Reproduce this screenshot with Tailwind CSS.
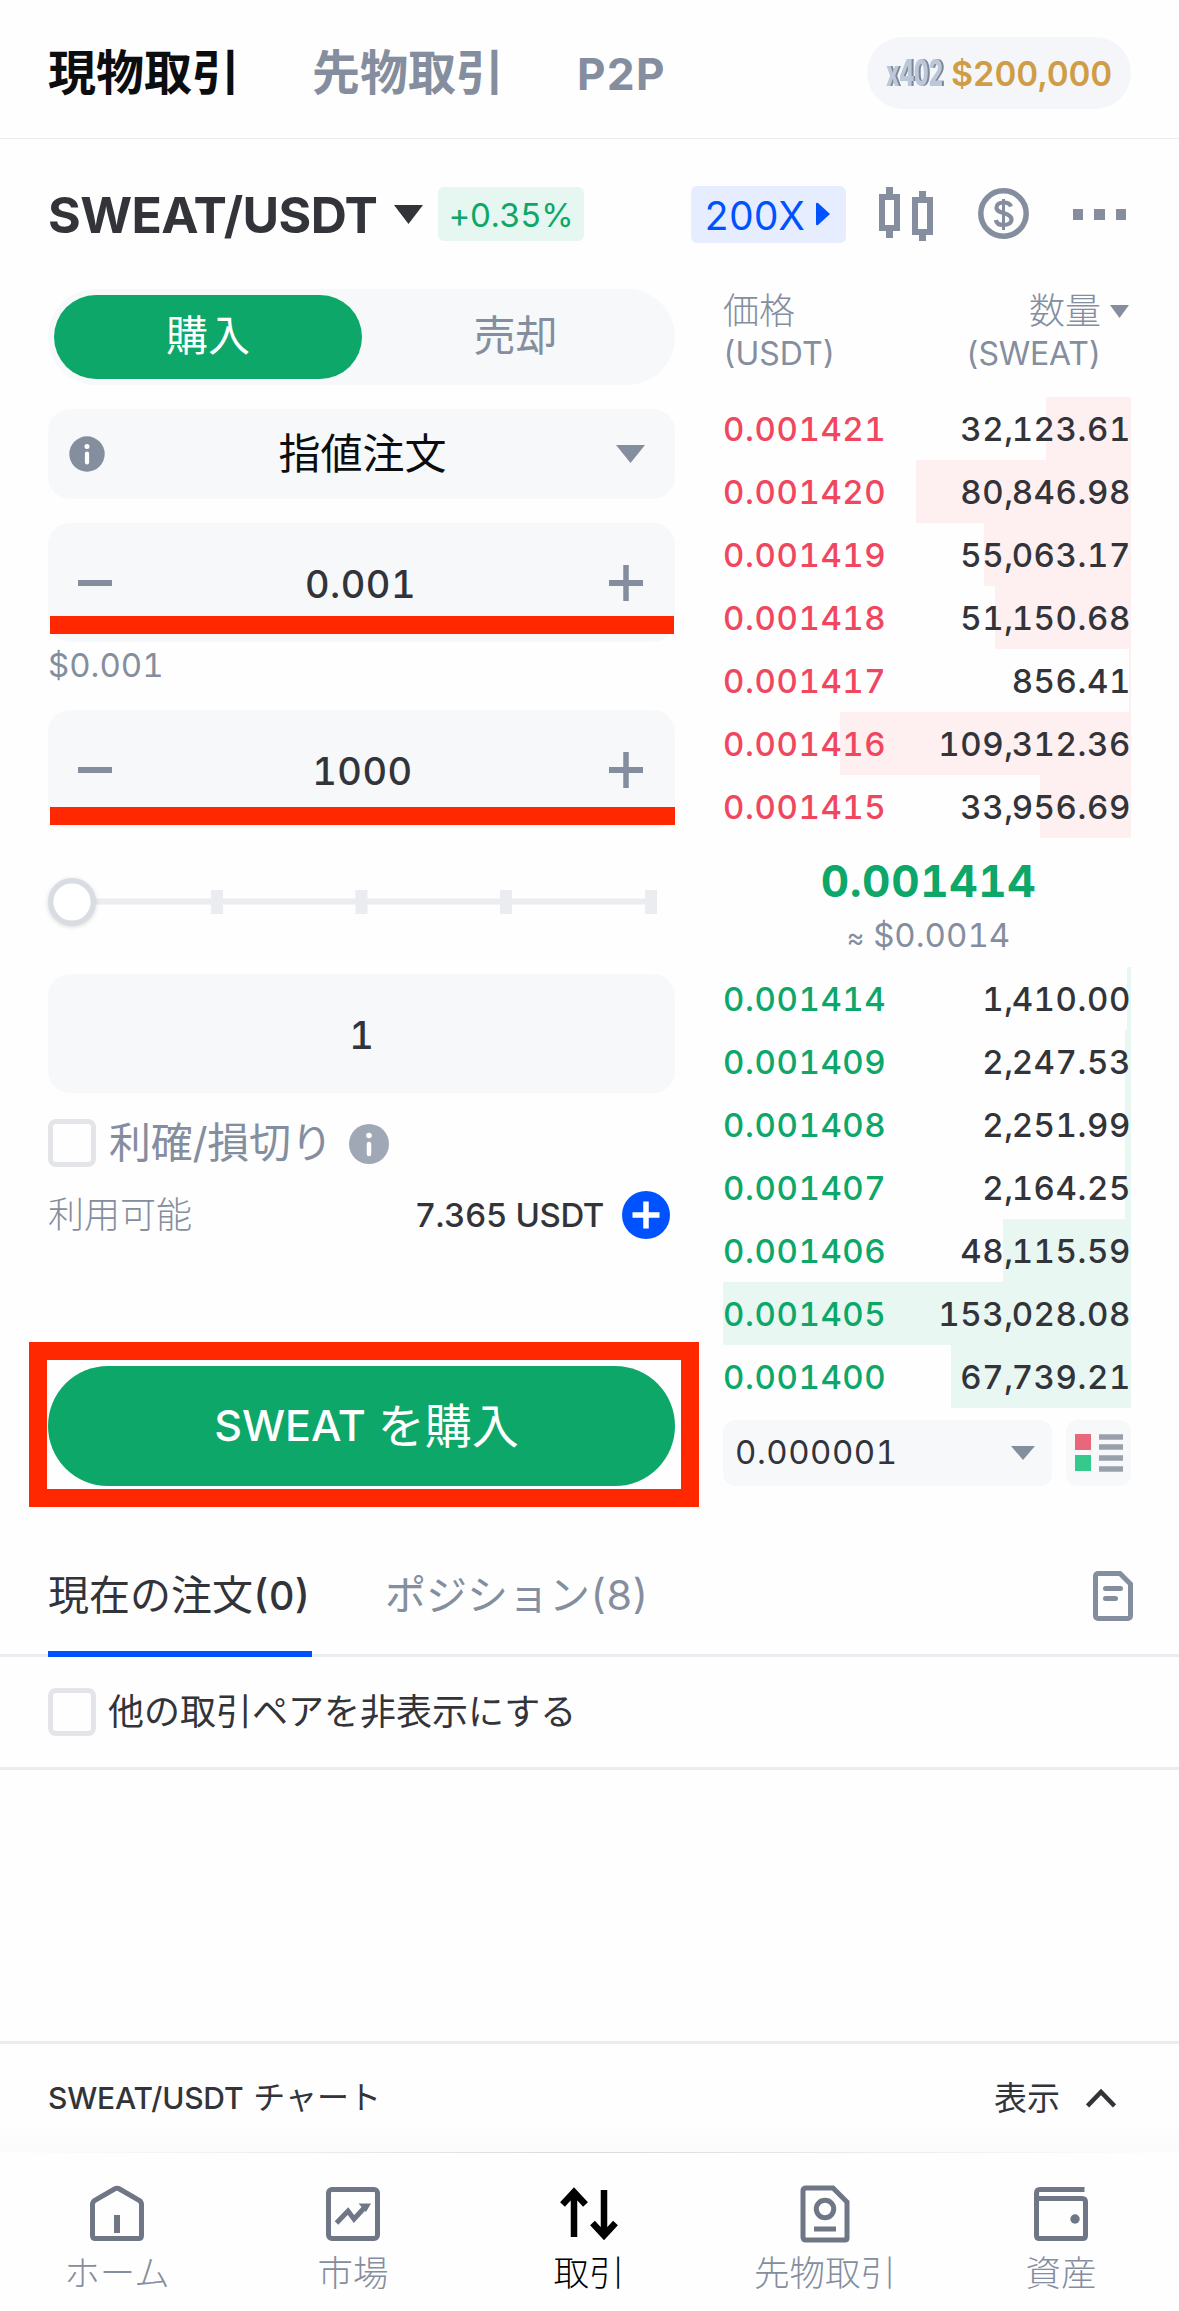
<!DOCTYPE html>
<html lang="ja">
<head>
  <meta charset="UTF-8" />
  <meta name="viewport" content="width=device-width, initial-scale=1.0"/>
  <title>SWEAT/USDT - 現物取引</title>
  <script src="https://cdn.jsdelivr.net/npm/@tailwindcss/browser@4"></script>
</head>
<body class="bg-[#fefefe] font-[Inter,'Noto_Sans_CJK_JP',sans-serif] text-[#32343a] tabular-nums whitespace-nowrap">
  <div class="w-[1179px] h-[2311px] flex flex-col overflow-hidden">

    <!-- Cabecera -->
    <header class="h-[139px] shrink-0 border-b border-[#ebecee] pl-12 pr-12 flex items-center justify-between">
      <nav class="flex items-center gap-[72px] font-bold text-[48px] leading-none h-[72px] mt-[7px]">
        <a class="text-[#0c0d0f]">現物取引</a>
        <a class="text-[#858e9e]">先物取引</a>
        <a class="text-[#858e9e] text-[44px] tracking-[1px] ml-[1px] mt-0.5">P2P</a>
      </nav>
      <div class="mt-[7px] w-[264px] h-[72px] rounded-full bg-[#f4f6fa] flex items-center pl-[15px]">
        <svg width="66" height="52" viewBox="0 0 66 52" class="shrink-0 drop-shadow-[2px_0px_0px_#7c8799]">
          <text x="4" y="39" textLength="57" lengthAdjust="spacingAndGlyphs" font-family="Inter" font-weight="800" font-size="37" fill="#bcc7d8">x402</text>
        </svg>
        <span class="ml-[3px] mt-0.5 text-[34px] font-semibold text-[#cf9d45] leading-none tracking-[-0.3px]">$200,000</span>
      </div>
    </header>

    <!-- Par de trading -->
    <section class="h-[150px] shrink-0 pl-12 pr-[48px] flex items-center">
      <h1 class="w-[328px] mt-0.5 text-[50px] font-bold leading-none tracking-[-0.6px]">SWEAT/USDT</h1>
      <svg class="ml-[18px]" width="29" height="19"><path d="M0 0h29L14.500 19z" fill="#32343a"/></svg>
      <span class="ml-[15px] w-[146px] h-[54px] rounded-md bg-[#e6f6f0] text-[#0da769] text-[33px] leading-[56px] text-center tracking-[-0.4px]">+0.35%</span>
      <span class="ml-[107px] w-[155px] h-[57px] rounded-md bg-[#e5edfe] text-[#0052ff] flex items-center pl-[13px]">
        <span class="w-[102px] mt-0.5 text-[39px] leading-none tracking-[-0.5px]">200X</span>
        <svg class="ml-[10px]" width="14" height="24"><path d="M0 2Q0 0 2 1L14 12L2 23Q0 24 0 22z" fill="#0052ff"/></svg>
      </span>
      <svg class="ml-[33px]" width="54" height="55" fill="#858e9e">
        <path fill-rule="evenodd" d="M7 0h7v7h7v37h-7v7H7v-7H0V7h7zM6 13v25h9V13z"/>
        <path fill-rule="evenodd" d="M40 4h7v6h7v38h-7v6h-7v-6h-7V10h7zM39 16v26h9V16z"/>
      </svg>
      <svg class="ml-[45px] -mt-0.5" width="51" height="51" fill="none" stroke="#858e9e">
        <circle cx="25.500" cy="25.500" r="22.700" stroke-width="5.500"/>
        <path d="M33 18.500C32 15.500 29.500 14.500 25.500 14.500C21.500 14.500 18.500 16.200 18.500 19.500C18.500 23 22 24 25.500 25C30 26.200 33.500 27.500 33.500 31.500C33.500 35 30 37 25.500 37C21.500 37 18.500 35.500 17.800 32" stroke-width="4.200"/>
        <path d="M25.500 11v31" stroke-width="3"/>
      </svg>
      <svg class="ml-[44px]" width="53" height="11" fill="#858e9e"><path d="M0 0h10v11H0zM21 0h11v11H21zM43 0h10v11H43z"/></svg>
    </section>

    <main class="h-[1218px] shrink-0 flex pl-12">
      <!-- Formulario de orden -->
      <form class="w-[627px] flex flex-col">
        <div class="h-24 shrink-0 rounded-full bg-[#f6f8fa] p-1.5 flex text-[42px] leading-[82px] text-center">
          <div class="w-[308px] rounded-full bg-[#0da769] text-white">購入</div>
          <div class="flex-1 text-[#858e9e]">売却</div>
        </div>

        <div class="mt-6 h-[90px] shrink-0 rounded-[22px] bg-[#f6f8fa] flex items-center justify-between pl-[21px] pr-[30px]">
          <svg width="36" height="36"><circle cx="18" cy="18" r="17.700" fill="#858e9e"/><circle cx="18" cy="10.500" r="2.500" fill="#fff"/><path d="M18 17.500v9" stroke="#fff" stroke-width="4.200" stroke-linecap="round"/></svg>
          <span class="pl-1 text-[42px] text-[#0c0d0f] leading-none">指値注文</span>
          <svg width="29" height="18"><path d="M0 0h29L14.500 18z" fill="#858e9e"/></svg>
        </div>

        <div class="relative mt-6 h-[119px] shrink-0 rounded-[22px] bg-[#f6f8fa] flex items-center justify-between pl-[30px] pr-8">
          <svg width="34" height="36"><path d="M0 18h34" stroke="#858e9e" stroke-width="6"/></svg>
          <span class="text-[38px] font-medium leading-none mt-0.5 tracking-[0.5px]">0.001</span>
          <svg width="34" height="36" stroke="#858e9e"><path d="M0 18h34" stroke-width="6"/><path d="M17 0v36" stroke-width="5.500"/></svg>
          <div class="absolute left-0.5 top-[93px] w-[624px] h-[18px] bg-[#ff2800]"></div>
        </div>
        <div class="mt-[3px] h-10 shrink-0 text-[33px] leading-10 text-[#858e9e]">$0.001</div>

        <div class="relative mt-[25px] h-[119px] shrink-0 rounded-[22px] bg-[#f6f8fa] flex items-center justify-between pl-[30px] pr-8">
          <svg width="34" height="36"><path d="M0 18h34" stroke="#858e9e" stroke-width="6"/></svg>
          <span class="text-[38px] font-medium leading-none mt-0.5 tracking-[0.5px] pl-1">1000</span>
          <svg width="34" height="36" stroke="#858e9e"><path d="M0 18h34" stroke-width="6"/><path d="M17 0v36" stroke-width="5.500"/></svg>
          <div class="absolute left-0.5 top-[97px] w-[625px] h-[18px] bg-[#ff2800]"></div>
        </div>

        <!-- Slider de porcentaje -->
        <svg class="mt-[43px] shrink-0 overflow-visible" width="627" height="60">
          <path d="M46 29.500h563" stroke="#ebecef" stroke-width="6"/>
          <path d="M163 18h12v24h-12zM307.500 18h12v24h-12zM452 18h12v24h-12zM597 18h12v24h-12z" fill="#ebecef"/>
          <circle cx="24" cy="30" r="21.300" fill="#fff" stroke="#d9dce2" stroke-width="5.400" class="drop-shadow-sm"/>
        </svg>

        <div class="mt-[42px] h-[119px] shrink-0 rounded-[22px] bg-[#f6f8fa] text-center text-[38px] font-medium leading-[122px]">1</div>

        <div class="mt-[26px] h-12 shrink-0 flex items-center">
          <span class="size-12 rounded-lg border-[5px] border-[#e3e5e9]"></span>
          <span class="ml-[13px] text-[42px] leading-none text-[#858e9e] tracking-[-0.3px]">利確/損切り</span>
          <svg class="ml-[17px] mt-0.5" width="40" height="40"><circle cx="20" cy="20" r="20" fill="#a1a8b5"/><circle cx="20" cy="11.500" r="2.800" fill="#fff"/><path d="M20 20v10" stroke="#fff" stroke-width="4.500" stroke-linecap="round"/></svg>
        </div>

        <div class="mt-6 h-12 shrink-0 flex items-center pr-[5px]">
          <span class="text-[36px] font-light leading-none text-[#858e9e]">利用可能</span>
          <span class="ml-auto text-[33px] font-medium leading-none tracking-[-0.4px]">7.365 USDT</span>
          <svg class="ml-[18px]" width="48" height="48"><circle cx="24" cy="24" r="24" fill="#0052ff"/><path d="M10.500 24h27M24 10.500v27" stroke="#fff" stroke-width="5.500"/></svg>
        </div>

        <div class="-ml-[19px] mt-[103px] w-[670px] h-[165px] shrink-0 border-[18px] border-[#ff2800] bg-[#fefefe] pl-px pt-1.5">
          <button type="button" class="w-[627px] h-[120px] rounded-full bg-[#0da769] text-white text-[47px] leading-none flex items-center justify-center pl-2.5 pb-0.5"><span class="text-[43px] font-medium mr-3">SWEAT</span>を購入</button>
        </div>
      </form>

      <!-- Libro de órdenes -->
      <div class="ml-12 w-[408px]">
        <div class="h-[108px] flex justify-between text-[36px] text-[#858e9e] leading-[44px]">
          <div>
            <div class="font-light">価格</div>
            <div class="text-[32px] -mt-px">(USDT)</div>
          </div>
          <div class="flex">
            <div class="text-right">
              <div class="font-light">数量</div>
              <div class="text-[32px] -mt-px tracking-[-0.2px]">(SWEAT)</div>
            </div>
            <svg class="ml-[9px] mr-[2px] mt-4" width="19" height="13"><path d="M0 0h19L9.500 13z" fill="#858e9e"/></svg>
          </div>
        </div>
        <div id="asks"></div>
        <div class="h-[129px] pt-[21px] text-center">
          <div class="text-[44px] font-bold leading-[44px] text-[#0da769] pl-[3px] tracking-[0.6px]">0.001414</div>
          <div class="mt-2.5 text-[33px] leading-[44px] text-[#858e9e] pl-[3px]"><span class="text-[27px]">≈</span> $0.0014</div>
        </div>
        <div id="bids"></div>
        <div class="mt-3 h-[66px] flex justify-between">
          <div class="w-[329px] rounded-xl bg-[#f6f8fa] flex items-center justify-between pl-3 pr-[17px] text-[33px] tracking-[0.5px]">
            <span>0.000001</span>
            <svg width="24" height="14"><path d="M0 0h24L12 14z" fill="#858e9e"/></svg>
          </div>
          <div class="w-[65px] rounded-xl bg-[#f6f8fa] flex items-center justify-center">
            <svg width="48" height="38"><path d="M0 0h16v16H0z" fill="#e8677a"/><path d="M0 21h16v16H0z" fill="#36c98e"/><path d="M24 3h24M24 13h24M24 24h24M24 35h24" stroke="#98a0ab" stroke-width="5.500"/></svg>
          </div>
        </div>
      </div>
    </main>

    <!-- Órdenes abiertas -->
    <section class="shrink-0 h-[150px] border-b-[3px] border-[#ebecef] pl-12 pr-[46px] flex justify-between">
      <div class="flex gap-[73px] text-[41px] leading-[176px]">
        <div class="relative w-[264px] h-[150px]">現在の注文<span class="font-medium text-[40px]">(0)</span><div class="absolute left-0 bottom-0 w-full h-1.5 bg-[#0052ff]"></div></div>
        <div class="text-[#858e9e]">ポジション(8)</div>
      </div>
      <svg class="mt-16" width="40" height="50" fill="none" stroke="#858e9e" stroke-width="5">
        <path d="M5 2.500H27L37.500 13V45a2.500 2.500 0 0 1-2.500 2.500H5A2.500 2.500 0 0 1 2.500 45V5A2.500 2.500 0 0 1 5 2.500z"/>
        <path d="M12.500 17.500h15M12.500 27.500h10" stroke-linecap="round"/>
      </svg>
    </section>
    <section class="shrink-0 h-[113px] border-b-[3px] border-[#ebecef] pl-12 flex items-center">
      <span class="size-12 rounded-lg border-[5px] border-[#e3e5e9]"></span>
      <span class="ml-3 text-[36px] leading-none">他の取引ペアを非表示にする</span>
    </section>

    <!-- Gráfico plegado -->
    <section class="mt-auto shrink-0 h-[111px] border-t-[3px] border-[#ebecef] bg-linear-to-b from-70% from-[#fefefe] to-[#fbfbfb] pl-12 pr-[63px] flex items-center text-[30px] leading-none">
      <span class="font-medium tracking-[-0.2px]">SWEAT/USDT</span>
      <span class="ml-2.5 text-[32px]">チャート</span>
      <span class="ml-auto text-[33px]">表示</span>
      <svg class="ml-[26px]" width="30" height="20" fill="none" stroke="#32343a" stroke-width="4.500"><path d="M1.500 18L15 4L28.500 18"/></svg>
    </section>

    <!-- Navegación inferior -->
    <div class="h-px shrink-0 bg-linear-to-r from-transparent via-[#d9dadd] to-transparent"></div>
    <nav class="h-[158px] shrink-0 grid grid-cols-5 -ml-px pt-8 text-[35.500px] font-light leading-[46px] text-center text-[#858e9e]">
      <div class="flex flex-col items-center gap-1.5">
        <svg width="58" height="60" fill="none" stroke="#6f7685" stroke-width="5"><path d="M4.500 19.500Q4.500 17 6.500 15.500L26.500 4Q29 2.500 31.500 4L51.500 15.500Q53.500 17 53.500 19.500V50.500Q53.500 53.500 50.500 53.500H7.500Q4.500 53.500 4.500 50.500z"/><path d="M29 30v18" stroke-width="6"/></svg>
        ホーム
      </div>
      <div class="flex flex-col items-center gap-1.5">
        <svg width="58" height="60" fill="none" stroke="#6f7685" stroke-width="5"><rect x="4.500" y="4.500" width="49" height="49" rx="3.500"/><path d="M12.500 38L24 26L30 34L42 21"/><path d="M34.500 18.500H47L42 27z" fill="#6f7685" stroke="none"/></svg>
        市場
      </div>
      <div class="flex flex-col items-center gap-1.5 text-black">
        <svg width="58" height="60" fill="none" stroke="#000" stroke-width="6.500"><path d="M14 52V8M2.500 19.500L14 7L25.500 19.500M44 5v44M32.500 38L44 50.500L55.500 38"/></svg>
        取引
      </div>
      <div class="flex flex-col items-center gap-1.5">
        <svg width="58" height="60" fill="none" stroke="#6f7685" stroke-width="5"><path d="M10 3H37L51 17V53Q51 55 49 55H10Q7 55 7 52V6Q7 3 10 3z"/><circle cx="29" cy="24" r="8.700"/><path d="M18 44h22"/></svg>
        先物取引
      </div>
      <div class="flex flex-col items-center gap-1.5">
        <svg width="58" height="60" fill="none" stroke="#6f7685" stroke-width="5"><path d="M52.500 4.500H8Q4.500 4.500 4.500 8V50.500Q4.500 53.500 7.500 53.500H50.500Q53.500 53.500 53.500 50.500V17Q53.500 13.500 50 13.500H4.500"/><circle cx="43" cy="34" r="4.700" fill="#6f7685" stroke="none"/></svg>
        資産
      </div>
    </nav>
  </div>

  <script>
    // [precio, cantidad, ancho de la barra de profundidad]
    const asks = [
      ['0.001421', '32,123.61', 85],
      ['0.001420', '80,846.98', 215],
      ['0.001419', '55,063.17', 147],
      ['0.001418', '51,150.68', 136],
      ['0.001417', '856.41', 2],
      ['0.001416', '109,312.36', 291],
      ['0.001415', '33,956.69', 91]
    ];
    const bids = [
      ['0.001414', '1,410.00', 4],
      ['0.001409', '2,247.53', 6],
      ['0.001408', '2,251.99', 6],
      ['0.001407', '2,164.25', 6],
      ['0.001406', '48,115.59', 128],
      ['0.001405', '153,028.08', 408],
      ['0.001400', '67,739.21', 180]
    ];

    function pintar(id, filas, texto, barra) {
      document.getElementById(id).innerHTML = filas.map(([precio, cantidad, ancho]) => `
        <div class="relative h-[63px] pt-0.5 flex justify-between items-center text-[33px] font-medium tracking-[0.6px]">
          <div class="absolute right-0 top-0 h-full ${barra}" style="width:${ancho}px"></div>
          <span class="relative ${texto}">${precio}</span>
          <span class="relative">${cantidad.replace(',', '<span class="-mr-[2px]">,</span>')}</span>
        </div>`).join('');
    }

    pintar('asks', asks, 'text-[#f0475f]', 'bg-[#feeff0]');
    pintar('bids', bids, 'text-[#0da769]', 'bg-[#e9f7f2]');
  </script>
</body>
</html>
